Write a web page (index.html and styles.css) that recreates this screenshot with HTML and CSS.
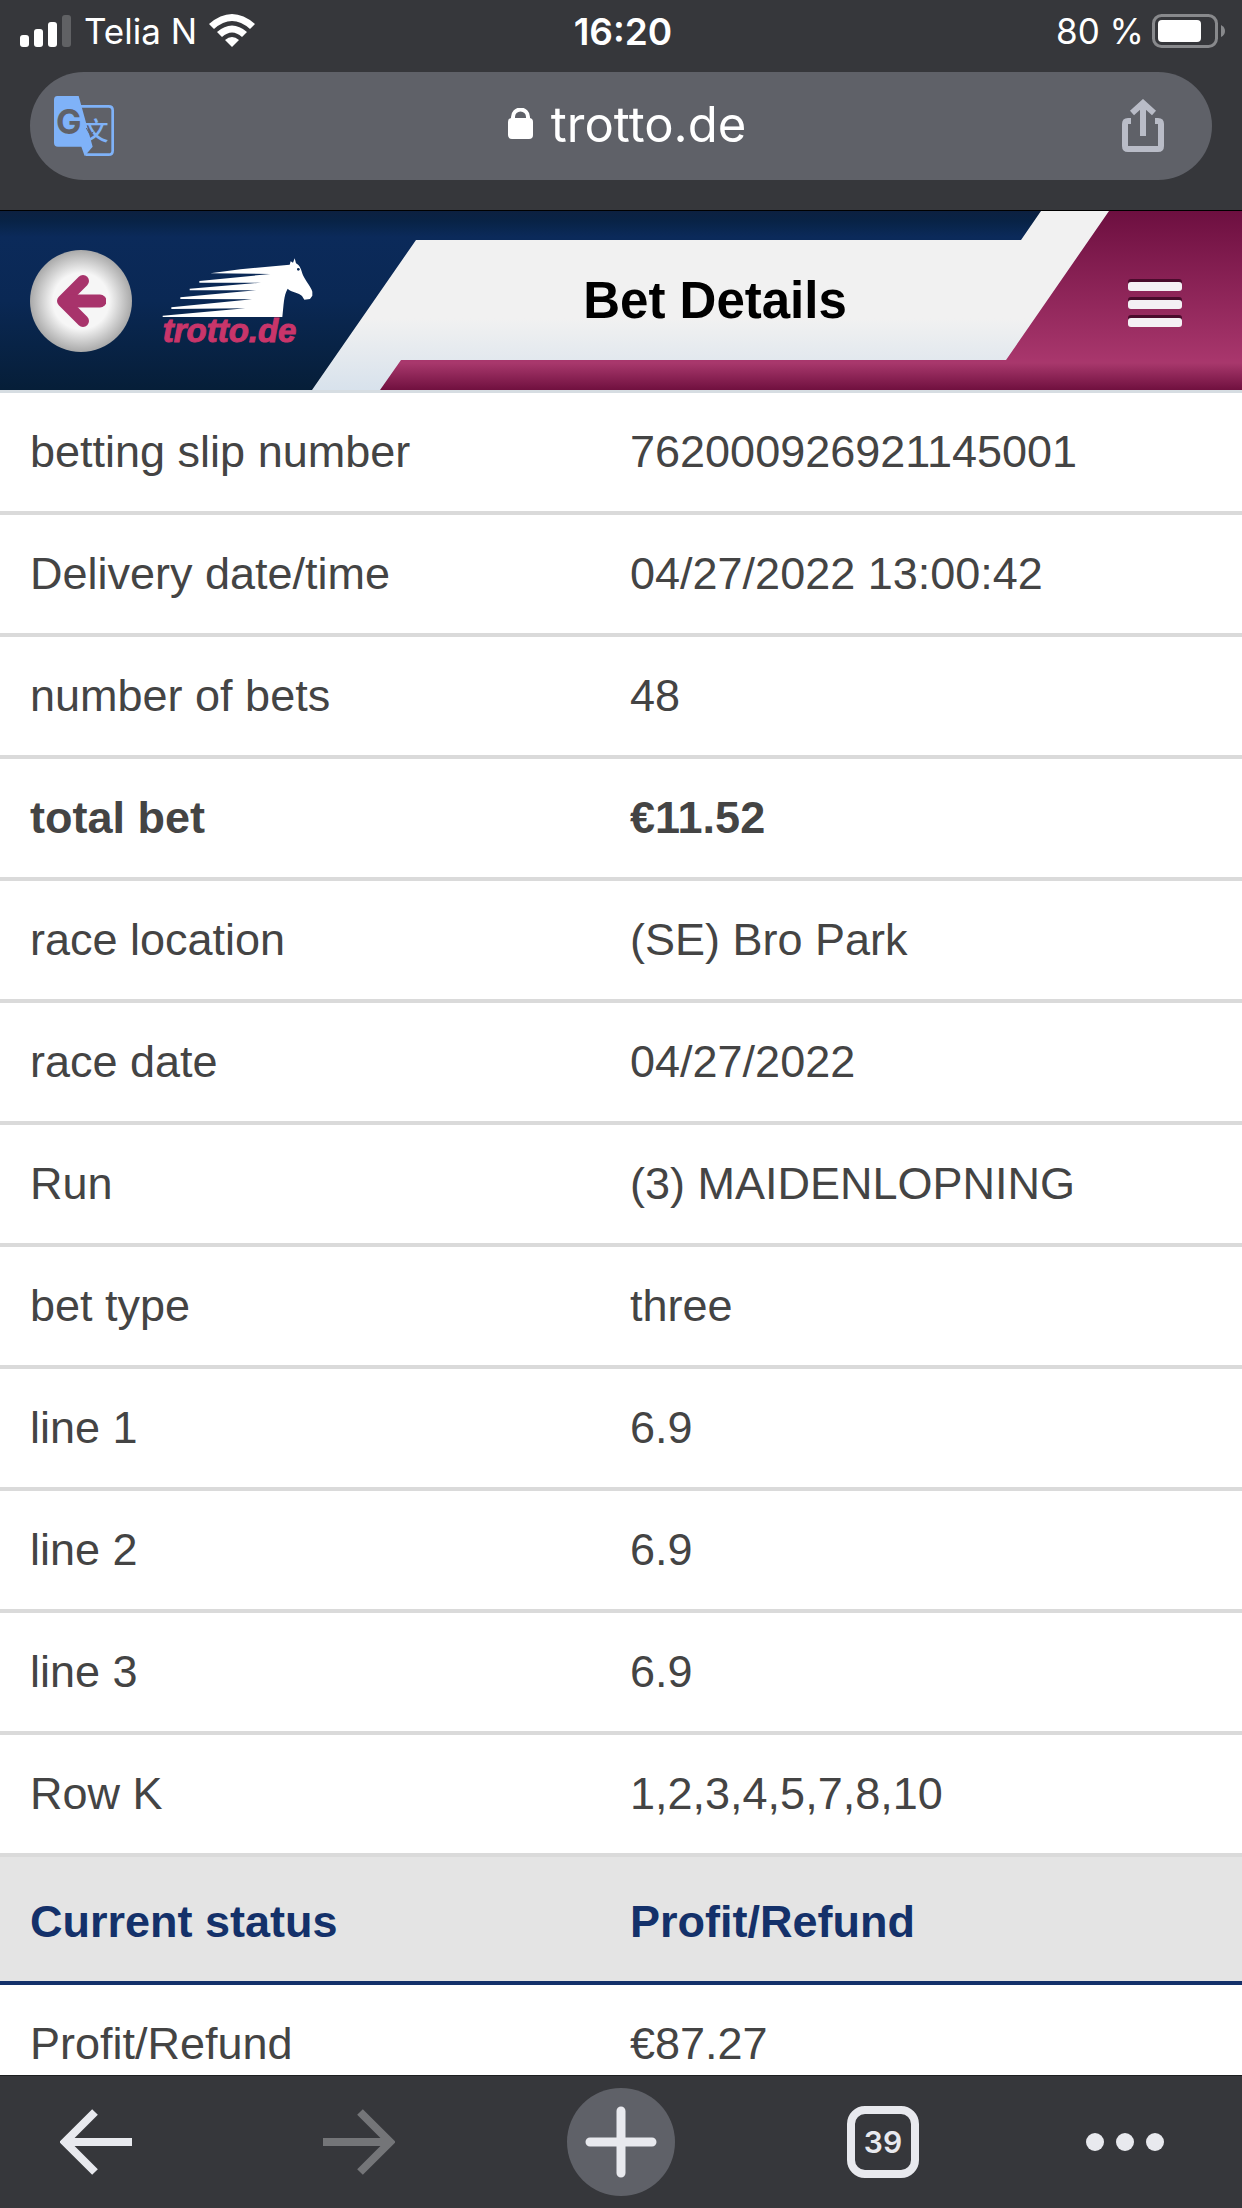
FILE: index.html
```html
<!DOCTYPE html>
<html lang="en">
<head>
  <meta charset="UTF-8">
  <title>Bet Details - trotto.de</title>
  <meta name="viewport" content="width=device-width, initial-scale=1.0">
  <link rel="stylesheet" href="styles.css">
</head>
<body>
  <div class="browser-top">
    <div class="status-bar">
      <div class="status-left">
        <svg class="signal" width="52" height="33" viewBox="0 0 52 33">
          <rect x="0" y="20" width="9" height="12" rx="3" fill="#fff"/>
          <rect x="14" y="14" width="9" height="18" rx="3" fill="#fff"/>
          <rect x="28" y="7" width="9" height="25" rx="3" fill="#fff"/>
          <rect x="42" y="0" width="9" height="32" rx="3" fill="#606164"/>
        </svg>
        <span>Telia N</span>
        <svg class="wifi" width="46" height="34" viewBox="0 0 46 34">
          <path d="M0 10 Q23 -10 46 10 L41 15 Q23 -1 5 15 Z" fill="#fff"/>
          <path d="M8 18 Q23 5 38 18 L33 23 Q23 14 13 23 Z" fill="#fff"/>
          <path d="M16 26 Q23 20 30 26 L23 33 Z" fill="#fff"/>
        </svg>
      </div>
      <div class="status-time">16:20</div>
      <div class="status-right">
        <span>80 %</span>
        <svg width="74" height="34" viewBox="0 0 74 34">
          <rect x="1.5" y="1.5" width="63" height="31" rx="8" fill="none" stroke="#88898c" stroke-width="3"/>
          <rect x="6" y="6" width="43" height="22" rx="4" fill="#fff"/>
          <path d="M69 11 Q73 13 73 17 Q73 21 69 23 Z" fill="#88898c"/>
        </svg>
      </div>
    </div>
    <div class="url-bar">
      <button class="url-button" aria-label="Translate">
        <svg width="60" height="60" viewBox="162 288 180 180">
          <path d="M236 319 H326 Q338 319 338 331 V452 Q338 464 326 464 H256" fill="none" stroke="#7fb2f8" stroke-width="8"/>
          <text x="250" y="420" class="glyph-cjk">文</text>
          <path d="M172 288 H236 L278 440 L254 468 L244 440 H174 Q162 440 162 428 V300 Q162 288 172 288 Z" fill="#7fb2f8"/>
          <text x="168" y="401" class="glyph-g">G</text>
          <path d="M259 384 L270 404 L280 396" fill="none" stroke="#5f6168" stroke-width="3"/>
        </svg>
      </button>
      <a class="url" href="#">
        <svg width="25" height="32" viewBox="0 0 25 32">
          <path d="M5 13 V9 A7.500 7.500 0 0 1 20 9 V13" fill="none" stroke="#fff" stroke-width="4"/>
          <rect x="0" y="10" width="25" height="21" rx="4" fill="#fff"/>
        </svg>
        <span>trotto.de</span>
      </a>
      <button class="url-button" aria-label="Share">
        <svg width="42" height="54" viewBox="0 0 42 54">
          <g fill="none" stroke="#b9bcc7" stroke-width="6">
            <path d="M9 22 H6 Q3 22 3 25 V47 Q3 50 6 50 H36 Q39 50 39 47 V25 Q39 22 36 22 H33"/>
            <path d="M21 37 V5 M10 14 L21 4 L32 14"/>
          </g>
        </svg>
      </button>
    </div>
  </div>

  <header class="site-header">
    <div class="header-left">
      <button class="back-button" aria-label="Back">
        <svg width="50" height="54" viewBox="0 0 50 54">
          <g fill="none" stroke="#a8336b" stroke-width="12" stroke-linecap="round" stroke-linejoin="round">
            <path d="M27 7 L7 27 L27 47"/>
            <path d="M10 27 H44" stroke-width="13"/>
          </g>
        </svg>
      </button>
      <a class="logo" href="#" aria-label="trotto.de">
        <svg width="152" height="96" viewBox="485 158 456 288">
          <path fill="#fff" d="M630 219 L720 207 L868 193 L871 183 L878 187 L883 174 L887 189 C900 196 902 208 908 225 C917 244 932 260 936 274 L936 286 L929 296 L912 298 L905 287 C897 276 872 277 862 265 C850 285 850 315 846 350 L487 350 L487 346 L735 324 L513 326 L513 321 L755 297 L540 296 L540 291 L767 270 L568 270 L568 265 L782 247 L597 247 L597 242 L810 221 Z"/>
          <circle cx="894" cy="207" r="4" fill="#0a2854"/>
          <text x="487" y="425" class="logo-text">trotto.de</text>
        </svg>
      </a>
    </div>
    <h1>Bet Details</h1>
    <button class="menu-button" aria-label="Menu">
      <span></span>
      <span></span>
      <span></span>
    </button>
  </header>

  <main>
    <table class="details">
      <tbody>
        <tr><td>betting slip number</td><td>762000926921145001</td></tr>
        <tr><td>Delivery date/time</td><td>04/27/2022 13:00:42</td></tr>
        <tr><td>number of bets</td><td>48</td></tr>
        <tr class="total"><td>total bet</td><td>€11.52</td></tr>
        <tr><td>race location</td><td>(SE) Bro Park</td></tr>
        <tr><td>race date</td><td>04/27/2022</td></tr>
        <tr><td>Run</td><td>(3) MAIDENLOPNING</td></tr>
        <tr><td>bet type</td><td>three</td></tr>
        <tr><td>line 1</td><td>6.9</td></tr>
        <tr><td>line 2</td><td>6.9</td></tr>
        <tr><td>line 3</td><td>6.9</td></tr>
        <tr><td>Row K</td><td>1,2,3,4,5,7,8,10</td></tr>
      </tbody>
      <tbody>
        <tr class="status"><th>Current status</th><th>Profit/Refund</th></tr>
        <tr><td>Profit/Refund</td><td>€87.27</td></tr>
      </tbody>
    </table>
  </main>

  <nav class="browser-nav">
    <button aria-label="Back">
      <svg width="72" height="66" viewBox="0 0 72 66">
        <path d="M35 3 L5 33 L35 63 M6 33 H72" fill="none" stroke="#e8e9ee" stroke-width="8"/>
      </svg>
    </button>
    <button aria-label="Forward" disabled>
      <svg width="72" height="66" viewBox="0 0 72 66">
        <path d="M37 3 L67 33 L37 63 M66 33 H0" fill="none" stroke="#747578" stroke-width="8"/>
      </svg>
    </button>
    <button class="new-tab" aria-label="New tab">
      <svg width="72" height="72" viewBox="0 0 72 72">
        <path d="M36 5 V67 M5 36 H67" fill="none" stroke="#e8e9ee" stroke-width="9" stroke-linecap="round"/>
      </svg>
    </button>
    <button aria-label="Tabs"><span class="tab-count">39</span></button>
    <button aria-label="More">
      <svg width="78" height="18" viewBox="0 0 78 18">
        <g fill="#e8e9ee">
          <circle cx="9" cy="9" r="9"/>
          <circle cx="39" cy="9" r="9"/>
          <circle cx="69" cy="9" r="9"/>
        </g>
      </svg>
    </button>
  </nav>
</body>
</html>
```
FILE: styles.css
```css
:root {
  --chrome: #36373b;
  --chrome-light: #5f6168;
  --icon: #e8e9ee;
  --line: #dadada;
  --text: #444;
  --blue: #14316a;
}

* {
  box-sizing: border-box;
}

body {
  margin: 0;
  height: 100vh;
  display: flex;
  flex-direction: column;
  overflow: hidden;
  background: #fff;
  color: var(--text);
  font-family: "Liberation Sans", Arial, sans-serif;
  font-size: 45px;
}

button {
  border: none;
  padding: 0;
  background: none;
  font: inherit;
  cursor: pointer;
}

svg {
  display: block;
  flex: none;
}

/* browser top */
.browser-top {
  flex: none;
  background: var(--chrome);
  color: #fff;
  padding-bottom: 30px;
  border-bottom: 1px solid #000;
  font-family: Inter, sans-serif;
}

.status-bar {
  display: grid;
  grid-template-columns: 1fr auto 1fr;
  align-items: center;
  height: 72px;
  padding: 0 16px 10px 20px;
  font-size: 35px;
}

.status-left,
.status-right {
  display: flex;
  align-items: center;
  gap: 12px;
}

.status-right {
  justify-content: flex-end;
  gap: 8px;
}

.status-time {
  font-size: 37px;
  font-weight: 600;
}

.url-bar {
  display: flex;
  align-items: center;
  justify-content: space-between;
  height: 108px;
  margin: 0 30px;
  padding: 0 48px 0 24px;
  border-radius: 54px;
  background: var(--chrome-light);
}

.url {
  display: flex;
  align-items: center;
  gap: 18px;
  padding: 0 0 4px 18px;
  color: #fff;
  text-decoration: none;
  font-size: 49px;
}

.glyph-g {
  font-family: Inter, sans-serif;
  font-size: 102px;
  font-weight: 700;
  fill: #5f6168;
}

.glyph-cjk {
  font-family: "Noto Sans CJK SC", sans-serif;
  font-size: 76px;
  font-weight: 500;
  fill: #7fb2f8;
}

/* site header */
.site-header {
  flex: none;
  position: relative;
  display: flex;
  align-items: center;
  height: 182px;
  border-bottom: 3px solid #d6dde2;
  background: linear-gradient(#0c2040, #082346 10px, #0b2a5a 26px, #0a2854 90px, #061e38);
}

.site-header::before,
.site-header::after {
  content: "";
  position: absolute;
  inset: 0;
}

/* grey band behind the title */
.site-header::before {
  background: linear-gradient(#f1f1f1 60%, #d8e2ec);
  clip-path: polygon(416px 29px, calc(100% - 221px) 29px, calc(100% - 201px) 0, 100% 0, 100% 100%, 312px 100%);
}

.site-header::after {
  background: linear-gradient(#6d0f40, #a8366c 149px, #a8386c 152px, #70103f);
  clip-path: polygon(calc(100% - 133px) 0, 100% 0, 100% 100%, 380px 100%, 401px 149px, calc(100% - 236px) 149px);
}

.header-left,
.site-header h1,
.menu-button {
  position: relative;
  z-index: 1;
}

.header-left {
  display: flex;
  align-items: center;
  gap: 30px;
  width: 316px;
  padding-left: 30px;
}

.back-button {
  flex: none;
  display: flex;
  align-items: center;
  justify-content: center;
  width: 102px;
  height: 102px;
  border-radius: 50%;
  background: radial-gradient(closest-side, #f6f6f6 55%, #a9a9a9);
}

.logo-text {
  font-family: "Liberation Sans", Arial, sans-serif;
  font-size: 99px;
  font-weight: bold;
  font-style: italic;
  fill: #c9356a;
  stroke: #c9356a;
  stroke-width: 3;
}

.site-header h1 {
  flex: 1;
  margin: 0;
  color: #000;
  font-size: 51px;
  line-height: 60px;
  text-align: center;
}

.menu-button {
  display: flex;
  flex-direction: column;
  gap: 9px;
  width: 128px;
  padding: 7px 0 0 14px;
}

.menu-button span {
  width: 54px;
  height: 9px;
  border-radius: 3px;
  background: #f4f0f4;
  box-shadow: 0 -3px 0 #4a0b2c;
}

/* bet table */
main {
  flex: 1;
  min-height: 0;
  overflow: hidden;
}

.details {
  width: 100%;
  border-collapse: collapse;
  table-layout: fixed;
  line-height: 54px;
}

.details td,
.details th {
  padding: 32px 9px;
  border-bottom: 4px solid var(--line);
  text-align: left;
}

.details td:first-child,
.details th:first-child {
  padding-left: 30px;
}

.total td {
  font-weight: bold;
}

.details .status th {
  padding-top: 38px;
  padding-bottom: 32px;
  border-bottom-color: var(--blue);
  background: #e4e4e4;
  color: var(--blue);
}

/* browser bottom */
.browser-nav {
  flex: none;
  display: grid;
  grid-template-columns: 228fr 262fr 262fr 262fr 228fr;
  align-items: center;
  justify-items: center;
  height: 133px;
  background: var(--chrome);
  border-top: 1px solid #1d1f20;
}

.browser-nav button {
  display: flex;
  align-items: center;
  justify-content: center;
  width: 108px;
  height: 108px;
}

.browser-nav button:first-child {
  justify-self: start;
  margin-left: 42px;
}

.browser-nav button:last-child {
  justify-self: end;
  margin-right: 63px;
}

.browser-nav .new-tab {
  border-radius: 50%;
  background: var(--chrome-light);
}

.tab-count {
  width: 72px;
  height: 72px;
  border: 8px solid var(--icon);
  border-radius: 18px;
  color: var(--icon);
  font-family: Inter, sans-serif;
  font-size: 30px;
  font-weight: 600;
  line-height: 56px;
  text-align: center;
}
```
